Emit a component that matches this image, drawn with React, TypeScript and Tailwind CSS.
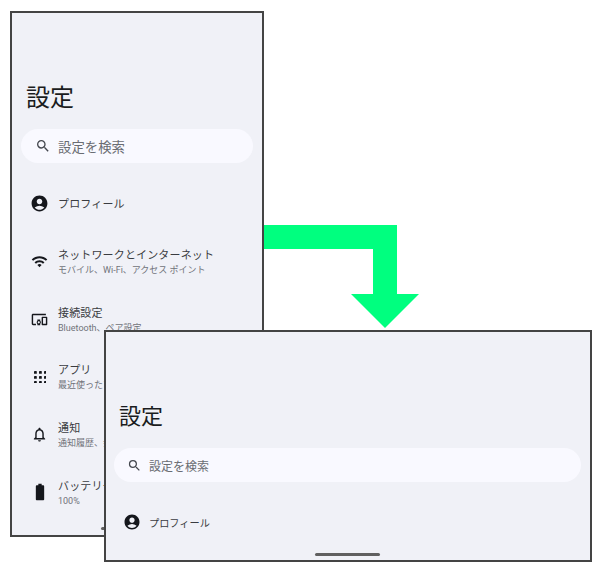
import { MdSearch, MdAccountCircle, MdWifi, MdOutlineDevicesOther, MdOutlineNotifications, MdBatteryFull } from "react-icons/md";
import type { ReactNode } from "react";

const font = { fontFamily: '"Roboto", "Noto Sans CJK JP", sans-serif' };

function AppsIcon() {
  const pts = [0, 5, 10];
  return (
    <svg width="12" height="12" viewBox="0 0 12 12" fill="currentColor">
      {pts.map((y) => pts.map((x) => <rect key={`${x}-${y}`} x={x} y={y} width="2.8" height="2.8" rx="0.4" />))}
    </svg>
  );
}

function Row({ icon, title, sub, h, col = "w-[37px]", text = "text-[11px] tracking-[0.15px]" }: { icon: ReactNode; title: string; sub?: string; h: string; col?: string; text?: string }) {
  return (
    <div className={`flex items-center ${h}`}>
      <div className={`flex shrink-0 justify-center pb-[2px] text-[#15171c] ${col}`}>{icon}</div>
      <div className="min-w-0 pt-[1px]">
        <div className={`whitespace-nowrap leading-[15px] text-[#3a3c41] ${text}`}>{title}</div>
        {sub && <div className="whitespace-nowrap text-[9px] leading-[15px] text-[#70737a]">{sub}</div>}
      </div>
    </div>
  );
}

function Search({ pad, gap, size, text }: { pad: string; gap: string; size: number; text: string }) {
  return (
    <div className={`flex h-[34px] items-center rounded-full bg-[#f9f9ff] ${pad}`}>
      <MdSearch size={size} className="text-[#44474e]" />
      <span className={`pt-[4px] leading-none text-[#696c72] ${text} ${gap}`}>設定を検索</span>
    </div>
  );
}

export default function App() {
  return (
    <div className="relative h-[572px] w-[600px] overflow-hidden bg-white" style={font}>
      <div className="absolute left-[10px] top-[11px] flex h-[526px] w-[254px] flex-col overflow-hidden border-2 border-[#444444] bg-[#f0f1f7]">
        <div className="px-[9px] pt-[70px]">
          <div className="pl-[5px] text-[24px] leading-[30px] text-[#1a1c20]">設定</div>
          <div className="mt-[16px]"><Search pad="pl-[14px]" gap="ml-[7px]" size={16} text="text-[13.4px]" /></div>
          <div className="mt-[11px] flex flex-col">
            <Row h="h-[60px]" icon={<MdAccountCircle size={19} />} title="プロフィール" />
            <Row h="h-[57px]" icon={<MdWifi size={17} />} title="ネットワークとインターネット" sub="モバイル、Wi-Fi、アクセス ポイント" />
            <Row h="h-[58px]" icon={<MdOutlineDevicesOther size={17} />} title="接続設定" sub="Bluetooth、ペア設定" />
            <Row h="h-[57px]" icon={<AppsIcon />} title="アプリ" sub="最近使ったアプリ、デフォルトのアプリ" />
            <Row h="h-[58px]" icon={<MdOutlineNotifications size={17} />} title="通知" sub="通知履歴、会話" />
            <Row h="h-[58px]" icon={<MdBatteryFull size={20} />} title="バッテリー" sub="100%" />
          </div>
        </div>
        <div className="mx-auto mt-auto mb-[5px] h-[3px] w-[72px] shrink-0 rounded-full bg-[#606060]" />
      </div>

      <svg className="absolute left-[264px] top-[225px]" width="156" height="104" viewBox="0 0 156 104">
        <path d="M0 0H133V69H155L121 103L87 69H109V24H0Z" fill="#00ff7f" />
      </svg>

      <div className="absolute left-[104px] top-[330px] flex h-[232px] w-[488px] flex-col border-2 border-[#444444] bg-[#f0f1f7]">
        <div className="pl-[8px] pr-[9px] pt-[70px]">
          <div className="pl-[5px] text-[22px] leading-[30px] text-[#1a1c20]">設定</div>
          <div className="mt-[16px]"><Search pad="pl-[13px]" gap="ml-[7px]" size={15} text="text-[12px]" /></div>
          <div className="mt-[11px]">
            <Row h="h-[60px]" col="w-[35px]" text="text-[10.2px]" icon={<MdAccountCircle size={18} />} title="プロフィール" />
          </div>
        </div>
        <div className="mt-auto mb-[6px] ml-[209px] h-[3px] w-[65px] shrink-0 rounded-full bg-[#606060]" />
      </div>
    </div>
  );
}
